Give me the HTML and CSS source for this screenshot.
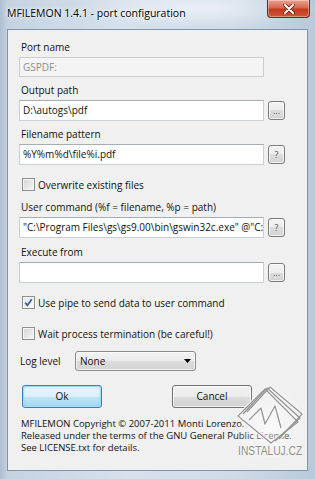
FILE: index.html
```html
<!DOCTYPE html>
<html lang="en">
<head>
  <meta charset="UTF-8" />
  <title>MFILEMON 1.4.1 - port configuration</title>
  <link rel="stylesheet" href="styles.css">
</head>
<body>
  <div class="window">
    <div class="titlebar">
      <span class="title">MFILEMON 1.4.1 - port configuration</span>
      <span class="close">
        <svg width="12" height="10" viewBox="0 0 12 10">
          <path d="M2 1 L10 9 M10 1 L2 9" stroke="#5a1a10" stroke-width="3.4" stroke-linecap="round"/>
          <path d="M2 1 L10 9 M10 1 L2 9" stroke="#fff" stroke-width="2" stroke-linecap="round"/>
        </svg>
      </span>
    </div>

    <div class="client">
      <div class="group g-port">
        <div class="label">Port name</div>
        <div class="row"><div class="edit disabled">GSPDF:</div></div>
      </div>

      <div class="group g-output">
        <div class="label">Output path</div>
        <div class="row">
          <div class="edit">D:\autogs\pdf</div>
          <span class="small-btn">...</span>
        </div>
      </div>

      <div class="group g-pattern">
        <div class="label">Filename pattern</div>
        <div class="row">
          <div class="edit">%Y%m%d\file%i.pdf</div>
          <span class="small-btn">?</span>
        </div>
      </div>

      <div class="check-row c-overwrite">
        <span class="checkbox"></span>
        <span>Overwrite existing files</span>
      </div>

      <div class="group g-command">
        <div class="label">User command (%f = filename, %p = path)</div>
        <div class="row">
          <div class="edit">"C:\Program Files\gs\gs9.00\bin\gswin32c.exe" @"C:</div>
          <span class="small-btn">?</span>
        </div>
      </div>

      <div class="group g-execute">
        <div class="label">Execute from</div>
        <div class="row">
          <div class="edit"></div>
          <span class="small-btn">...</span>
        </div>
      </div>

      <div class="check-row c-pipe">
        <span class="checkbox checked">
          <svg width="11" height="11" viewBox="0 0 11 11">
            <path d="M2.2 5.6 L4.4 8.3 L8.8 2.2" fill="none" stroke="#3d5894" stroke-width="1.7"/>
          </svg>
        </span>
        <span>Use pipe to send data to user command</span>
      </div>

      <div class="check-row c-wait">
        <span class="checkbox"></span>
        <span>Wait process termination (be careful!)</span>
      </div>

      <div class="log-row">
        <span class="log-label">Log level</span>
        <div class="combo">
          <span>None</span>
          <svg width="7" height="4" viewBox="0 0 7 4"><path d="M0 0 H7 L3.5 4 Z" fill="#000"/></svg>
        </div>
      </div>

      <div class="buttons">
        <span class="btn default">Ok</span>
        <span class="btn">Cancel</span>
      </div>

      <div class="about">
        MFILEMON Copyright © 2007-2011 Monti Lorenzo.<br>
        Released under the terms of the GNU General Public License.<br>
        See LICENSE.txt for details.
      </div>
    </div>

    <!-- watermark over the dialog -->
    <div class="watermark">
      <svg width="70" height="60" viewBox="0 0 70 60">
        <g fill="none" stroke-linejoin="round">
          <g stroke="#fff" stroke-width="3.2" opacity="0.85">
            <path d="M3 32 L30 5 L63 38 L36 59 Z"/>
            <path d="M12 28 L35 3 L67 30 L44 55"/>
            <path d="M14 36 L26 24 L30 40 L40 22 L46 44"/>
          </g>
          <g stroke="#969696" stroke-width="1.3">
            <path d="M3 32 L30 5 L63 38 L36 59 Z"/>
            <path d="M8 30 L32 4 L65 34 L40 57"/>
            <path d="M12 28 L35 3 L67 30 L44 55"/>
            <path d="M14 36 L26 24 L30 40 L40 22 L46 44"/>
          </g>
        </g>
      </svg>
      <span class="wm-text">INSTALUJ.CZ</span>
    </div>
  </div>
</body>
</html>
```

FILE: styles.css
```css
body {
  margin: 0;
  font-family: "Open Sans", "Noto Sans", sans-serif;
  font-size: 10px;
  color: #111;
}
.window {
  position: relative;
  width: 315px;
  height: 479px;
  overflow: hidden;
  background:
    radial-gradient(ellipse 120px 20px at 200px 8px, rgba(255,255,255,0.55), rgba(255,255,255,0)),
    linear-gradient(90deg, #aebfd1 0, #c5d3e1 8px, #d6e1ec 40%, #cfdbe7 75%, #b9c9da 100%);
}
.titlebar {
  display: flex;
  justify-content: space-between;
  align-items: flex-start;
  height: 29px;
  padding: 0 5px 0 7px;
}
.title {
  margin-top: 6px;
  font-size: 10.5px;
  line-height: 15px;
  color: #000;
  text-shadow: 0 0 6px #fff, 0 0 3px #fff;
}
.close {
  display: flex;
  align-items: center;
  justify-content: center;
  width: 43px;
  height: 18px;
  box-sizing: border-box;
  border: 1px solid #6b2a1d;
  border-top: none;
  border-radius: 0 0 4px 4px;
  background: linear-gradient(#eba392, #d8684e 45%, #c43a1f 55%, #d0553a);
  box-shadow: inset 0 0 0 1px rgba(255,255,255,0.35);
}
.client {
  height: 440px;
  margin: 0 7px;
  padding: 0 11px;
  border: 1px solid #8194a9;
  background: #f0f0f0;
}
.label {
  line-height: 15px;
  padding-left: 2px;
  margin-bottom: 2px;
}
.row {
  display: flex;
  align-items: center;
}
.edit {
  width: 245px;
  height: 21px;
  box-sizing: border-box;
  padding-left: 3px;
  border: 1px solid #c8cfd7;
  border-top-color: #a6adb5;
  background: #fff;
  line-height: 19px;
  white-space: nowrap;
  overflow: hidden;
}
.edit.disabled {
  height: 20px;
  line-height: 18px;
  border-color: #cdcdcd;
  background: #f4f4f4;
  color: #8e8e8e;
}
.small-btn {
  width: 17px;
  height: 19px;
  margin-left: 4px;
  box-sizing: border-box;
  border: 1px solid #7a7a7a;
  border-radius: 3px;
  background: linear-gradient(#f4f4f4, #ececec 50%, #dedede 50%, #d2d2d2);
  box-shadow: inset 0 0 0 1px rgba(255,255,255,0.7);
  text-align: center;
  line-height: 17px;
  font-size: 9px;
  color: #555;
}
.g-port { margin-top: 10px; }
.g-output { margin-top: 6px; }
.g-pattern { margin-top: 6px; }
.g-command { margin-top: 8px; }
.g-execute { margin-top: 7px; }

.check-row {
  display: flex;
  align-items: center;
  gap: 3px;
  height: 15px;
  padding-left: 3px;
}
.c-overwrite { margin-top: 12px; }
.c-pipe { margin-top: 12px; }
.c-wait { margin-top: 16px; }
.checkbox {
  display: flex;
  align-items: center;
  justify-content: center;
  width: 13px;
  height: 13px;
  box-sizing: border-box;
  border: 1px solid #8e8f8f;
  background: linear-gradient(135deg, #d4d4d4, #f7f7f7);
  box-shadow: inset 0 0 0 1px #f6f6f6;
}
.checkbox.checked {
  background: linear-gradient(135deg, #dfe6f0, #fbfcfd);
}
.log-row {
  display: flex;
  align-items: center;
  height: 20px;
  margin-top: 10px;
}
.log-label {
  width: 55px;
  padding-left: 1px;
}
.combo {
  display: flex;
  justify-content: space-between;
  align-items: center;
  width: 121px;
  height: 20px;
  box-sizing: border-box;
  padding: 0 4px 0 4px;
  border: 1px solid #8a8a8a;
  border-radius: 3px;
  background: linear-gradient(#f3f3f3, #ebebeb 50%, #dddddd 50%, #d4d4d4);
  box-shadow: inset 0 0 0 1px rgba(255,255,255,0.7);
}
.buttons {
  display: flex;
  gap: 70px;
  margin-top: 14px;
  padding-left: 3px;
}
.btn {
  width: 80px;
  height: 23px;
  box-sizing: border-box;
  border: 1px solid #707070;
  border-radius: 3px;
  background: linear-gradient(#f2f2f2, #ebebeb 50%, #dddddd 50%, #cfcfcf);
  box-shadow: inset 0 0 0 1px rgba(255,255,255,0.75);
  text-align: center;
  line-height: 21px;
}
.btn.default {
  border-color: #3c7fb1;
  background: linear-gradient(#e8f5fc, #dbeffa 50%, #bee4f7 50%, #a8d8f1);
  box-shadow: inset 0 0 0 1px #9fdcf7, inset 0 0 3px #7fd0f3;
}
.about {
  margin-top: 10px;
  padding-left: 2px;
  font-size: 9.5px;
  line-height: 12px;
  white-space: nowrap;
}
.watermark {
  position: absolute;
  left: 234px;
  top: 384px;
  width: 72px;
  display: flex;
  flex-direction: column;
  align-items: center;
  background: radial-gradient(ellipse at 50% 60%, rgba(255,255,255,0.6), rgba(255,255,255,0) 70%);
}
.wm-text {
  font-family: "Liberation Sans", sans-serif;
  font-size: 12.5px;
  line-height: 14px;
  color: #8d8d8d;
  transform: scaleX(0.82);
  text-shadow: 0 0 2px #fff, 0 0 2px #fff;
}
```
